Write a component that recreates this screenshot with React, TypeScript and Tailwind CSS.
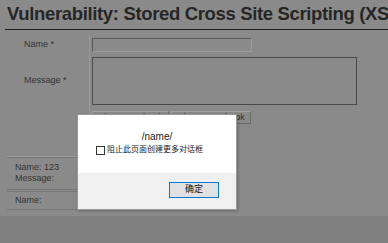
export default function App() {
  const sans = { fontFamily: '"Liberation Sans", Arial, sans-serif' };
  const cjk = { fontFamily: '"Liberation Sans", "Noto Sans CJK SC", sans-serif' };

  return (
    <div className="relative h-[243px] w-[388px] overflow-hidden bg-[#8a8a8a] text-[#2a2a2a]" style={sans}>
      <h1 className="whitespace-nowrap pl-[7px] pt-[3px] text-[18.5px] font-bold leading-[22px] tracking-[-0.35px] text-[#262626]">
        Vulnerability: Stored Cross Site Scripting (XSS)
      </h1>
      <div className="ml-[5px] mt-[4px] border-t border-[#1e1e1e]" />

      <div className="mt-[5px] flex flex-col text-[9px] text-[#333]">
        <div className="flex h-[20px]">
          <div className="flex w-[90px] items-center border-r border-[#9a9a9a] pl-[24px]">Name *</div>
          <div className="pl-[2px] pt-[3px]">
            <div className="h-[14px] w-[160px] border border-[#5a5a5a] border-b-[#9a9a9a] border-r-[#9a9a9a]" />
          </div>
        </div>
        <div className="flex h-[52px]">
          <div className="flex w-[90px] items-center border-r border-[#9a9a9a] pl-[24px]">Message *</div>
          <div className="pl-[2px] pt-[2px]">
            <div className="h-[48px] w-[265px] border border-[#4a4a4a]" />
          </div>
        </div>
        <div className="flex h-[20px]">
          <div className="w-[90px] border-r border-[#9a9a9a]" />
          <div className="flex gap-[2px] pl-[2px] pt-[4px]">
            <div className="flex h-[13px] w-[77px] items-center justify-center border border-[#a2a2a2] border-b-[#6a6a6a] border-r-[#6a6a6a]">
              Sign Guestbook
            </div>
            <div className="flex h-[13px] w-[80px] items-center justify-center border border-[#a2a2a2] border-b-[#6a6a6a] border-r-[#6a6a6a]">
              Clear Guestbook
            </div>
          </div>
        </div>
      </div>

      <div className="ml-[7px] mt-[29px] w-[220px] text-[9px] leading-[11px] text-[#333]">
        <div className="border-t border-[#9c9c9c]" />
        <div className="border-y border-[#767676] px-[8px] pb-[5px] pt-[4px]">
          <div>Name: 123</div>
          <div>Message:</div>
        </div>
        <div className="mt-[1px] border-y border-[#767676] px-[8px] pb-[3px] pt-[3px]">
          <div>Name:</div>
        </div>
      </div>

      <div className="absolute bottom-0 left-0 h-[27px] w-full bg-[#808080]" />

      <div className="absolute left-[77px] top-[114px] flex h-[96px] w-[160px] flex-col border border-[#9a9a9a] shadow-[1px_1px_3px_rgba(0,0,0,0.25)]">
        <div className="flex h-[58px] flex-col bg-white">
          <div className="mt-[16px] text-center text-[10px] leading-[12px] text-[#222]">/name/</div>
          <div className="mt-[2px] flex items-center pl-[18px]">
            <div className="h-[9px] w-[9px] border border-[#333] bg-white" />
            <span className="ml-[2px] text-[8px] leading-[10px] text-[#222]" style={cjk}>
              阻止此页面创建更多对话框
            </span>
          </div>
        </div>
        <div className="flex flex-1 justify-end bg-[#f0f0f0] pr-[17px] pt-[9px]">
          <div className="flex h-[16px] w-[50px] items-center justify-center border border-[#0078d7] bg-[#e1e1e1] text-[9px] text-[#111]" style={cjk}>
            确定
          </div>
        </div>
      </div>
    </div>
  );
}
